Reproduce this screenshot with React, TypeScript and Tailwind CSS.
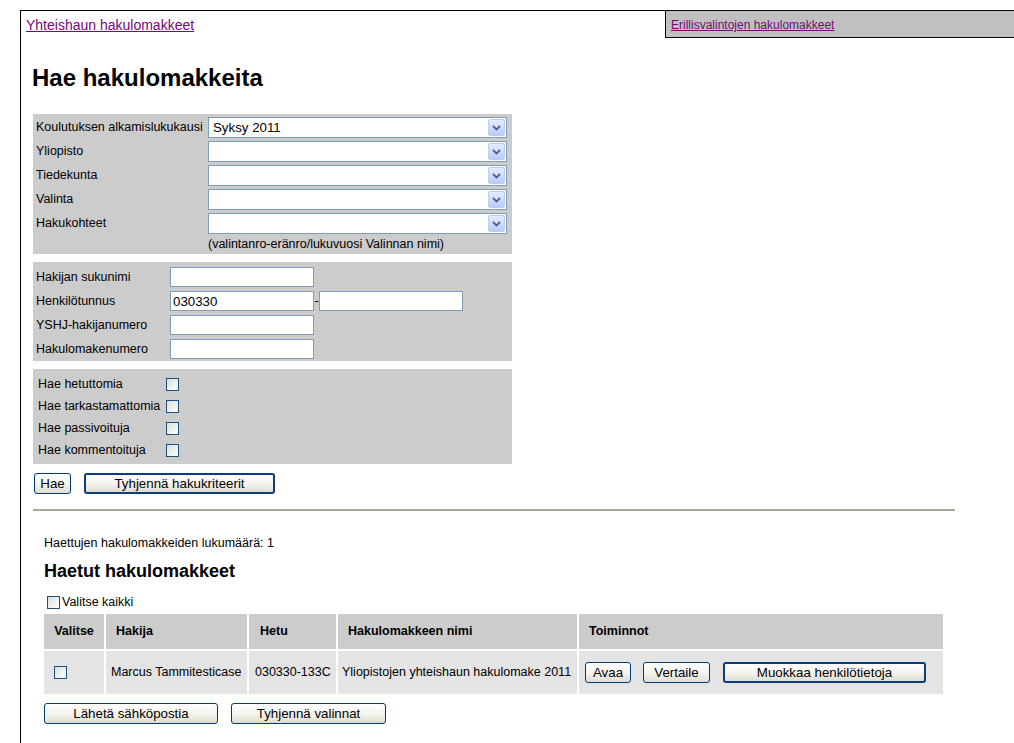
import type { ReactNode } from 'react'

const btn =
  'flex h-[21px] items-center justify-center rounded-[3px] bg-gradient-to-b from-white via-[#f5f4ef] to-[#dedcd2] text-[13.3px] leading-none text-black'

function XpButton({ children, className, strong }: { children: ReactNode; className: string; strong?: boolean }) {
  return (
    <button className={`${btn} ${strong ? 'border-2 border-[#0b3e78]' : 'border border-[#003c74]'} ${className}`}>
      {children}
    </button>
  )
}

function XpSelect({ value }: { value?: string }) {
  return (
    <div className="flex h-[21px] w-[299px] items-center border border-[#7f9db9] bg-white p-[1px]">
      <span className="pl-[3px] text-[13.3px] leading-none">{value}</span>
      <span className="ml-auto flex h-full w-[17px] items-center justify-center rounded-[2px] border border-[#bccbf0] bg-gradient-to-b from-[#e3ebfe] to-[#b8ccf8]">
        <svg width="9" height="6" viewBox="0 0 9 6">
          <path d="M1 1l3.5 3.5L8 1" fill="none" stroke="#4d6185" strokeWidth="1.8" />
        </svg>
      </span>
    </div>
  )
}

function XpInput({ value }: { value?: string }) {
  return (
    <input
      readOnly
      value={value ?? ''}
      className="h-[20px] w-[144px] border border-[#7f9db9] bg-white px-[2px] text-[13.3px] leading-none text-black outline-none"
    />
  )
}

function Box() {
  return <span className="block h-[13px] w-[13px] shrink-0 border border-[#1c5180] bg-gradient-to-br from-[#dcdcd7] to-white" />
}

const SELECTS: [string, string][] = [
  ['Koulutuksen alkamislukukausi', 'Syksy 2011'],
  ['Yliopisto', ''],
  ['Tiedekunta', ''],
  ['Valinta', ''],
  ['Hakukohteet', ''],
]

const CHECKS = ['Hae hetuttomia', 'Hae tarkastamattomia', 'Hae passivoituja', 'Hae kommentoituja']

export default function App() {
  return (
    <div className="h-[743px] w-[1014px] overflow-hidden bg-white font-['Liberation_Sans',Arial,sans-serif] text-[12.5px] text-black">
      <div className="ml-[20px] mt-[10px] min-h-[780px] w-[1010px] border-l border-t border-black">
        {/* top links */}
        <div className="flex h-[27px]">
          <a href="#" className="ml-[5px] mt-[6px] text-[14px] leading-[16px] text-[#800080] underline">
            Yhteishaun hakulomakkeet
          </a>
          <div className="ml-auto h-[27px] w-[365px] border-b border-l border-black bg-[#c0c0c0] pl-[5px] pt-[5px]">
            <a href="#" className="text-[12px] leading-[14px] text-[#800080] underline">
              Erillisvalintojen hakulomakkeet
            </a>
          </div>
        </div>

        <h1 className="ml-[11px] mt-[26px] text-[24px] font-bold leading-[28px]">Hae hakulomakkeita</h1>

        <div className="pl-[12px]">
          <div className="mt-[22px] w-[479px] bg-[#cccccc] pb-[2px] pl-[3px] pt-[3px]">
            <div className="grid grid-cols-[172px_299px] items-center gap-y-[3px]">
              {SELECTS.map(([label, value]) => (
                <div key={label} className="contents">
                  <div className="leading-[15px]">{label}</div>
                  <XpSelect value={value} />
                </div>
              ))}
              <div />
              <div className="leading-[15px]">(valintanro-eränro/lukuvuosi Valinnan nimi)</div>
            </div>
          </div>

          <div className="mt-[8px] flex w-[479px] flex-col gap-[4px] bg-[#cccccc] pb-[2px] pl-[3px] pt-[5px]">
            <div className="flex h-[20px] items-center">
              <div className="w-[134px]">Hakijan sukunimi</div>
              <XpInput />
            </div>
            <div className="flex h-[20px] items-center">
              <div className="w-[134px]">Henkilötunnus</div>
              <XpInput value="030330" />
              <span className="w-[5px] text-center">-</span>
              <XpInput />
            </div>
            <div className="flex h-[20px] items-center">
              <div className="w-[134px]">YSHJ-hakijanumero</div>
              <XpInput />
            </div>
            <div className="flex h-[20px] items-center">
              <div className="w-[134px]">Hakulomakenumero</div>
              <XpInput />
            </div>
          </div>

          <div className="mt-[8px] w-[479px] bg-[#cccccc] pb-[3px] pl-[5px] pt-[4px]">
            {CHECKS.map((c) => (
              <div key={c} className="flex h-[22px] items-center">
                <div className="w-[128px]">{c}</div>
                <Box />
              </div>
            ))}
          </div>

          <div className="mt-[9px] flex gap-[13px] pl-[1px]">
            <XpButton className="w-[37px]">Hae</XpButton>
            <XpButton className="w-[191px]" strong>
              Tyhjennä hakukriteerit
            </XpButton>
          </div>

          <div className="mt-[15px] w-[922px] border-t-2 border-[#aca899]" />
        </div>

        <div className="pl-[23px]">
          <div className="mt-[25px] leading-[15px]">Haettujen hakulomakkeiden lukumäärä: 1</div>
          <h2 className="mt-[9px] text-[18px] font-bold leading-[22px]">Haetut hakulomakkeet</h2>
          <div className="mt-[13px] flex h-[15px] items-center gap-[2px] pl-[3px]">
            <Box />
            <span>Valitse kaikki</span>
          </div>

          <div className="mt-[4px] grid w-[899px] grid-cols-[60px_141px_87px_239px_364px] gap-[2px]">
            <div className="flex h-[35px] items-center justify-center bg-[#cccccc] font-bold">Valitse</div>
            <div className="flex items-center bg-[#cccccc] pl-[10px] font-bold">Hakija</div>
            <div className="flex items-center bg-[#cccccc] pl-[11px] font-bold">Hetu</div>
            <div className="flex items-center bg-[#cccccc] pl-[10px] font-bold">Hakulomakkeen nimi</div>
            <div className="flex items-center bg-[#cccccc] pl-[10px] font-bold">Toiminnot</div>

            <div className="flex h-[43px] items-center bg-[#e4e4e4] pl-[10px]">
              <Box />
            </div>
            <div className="flex items-center bg-[#e4e4e4] pl-[5px]">Marcus Tammitesticase</div>
            <div className="flex items-center bg-[#e4e4e4] pl-[6px]">030330-133C</div>
            <div className="flex items-center bg-[#e4e4e4] pl-[4px]">Yliopistojen yhteishaun hakulomake 2011</div>
            <div className="flex items-center bg-[#e4e4e4] pl-[6px]">
              <XpButton className="w-[46px]">Avaa</XpButton>
              <XpButton className="ml-[12px] w-[67px]">Vertaile</XpButton>
              <XpButton className="ml-[13px] w-[203px]" strong>
                Muokkaa henkilötietoja
              </XpButton>
            </div>
          </div>

          <div className="mt-[9px] flex gap-[13px]">
            <XpButton className="w-[174px]">Lähetä sähköpostia</XpButton>
            <XpButton className="w-[155px]">Tyhjennä valinnat</XpButton>
          </div>
        </div>
      </div>
    </div>
  )
}
